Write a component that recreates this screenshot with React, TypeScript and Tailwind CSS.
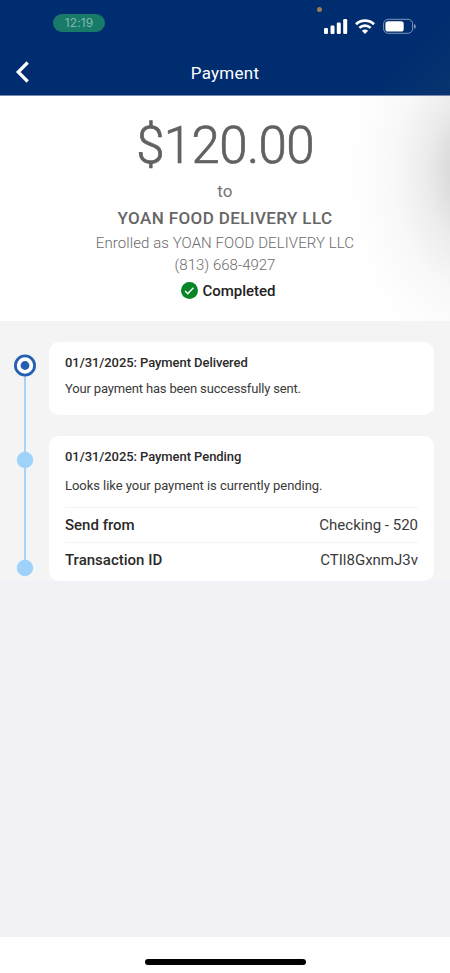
import type { ReactNode } from "react";

function StatusBar() {
  return (
    <div className="relative h-[50px]">
      <div className="absolute left-[53px] top-[14px] flex h-[18px] w-[52px] items-center justify-center rounded-full bg-[#187a68] font-['Inter',sans-serif] text-[12px] tracking-[0.1px] text-[#7fb9ae]">
        12:19
      </div>
      <span className="absolute left-[317px] top-[7px] h-[5px] w-[5px] rounded-full bg-[#9a7a58]" />
      <div className="absolute left-[324px] top-[18px] flex items-start">
        <svg width="24" height="17" viewBox="0 0 24 17" fill="#fff">
          <rect x="0" y="10" width="4" height="6" rx="1.2" />
          <rect x="6.5" y="7.5" width="4" height="8.5" rx="1.2" />
          <rect x="12.8" y="4.5" width="4" height="11.5" rx="1.2" />
          <rect x="19.2" y="1" width="4" height="15" rx="1.2" />
        </svg>
        <svg className="ml-[7px]" width="20" height="17" viewBox="0 0 20 17">
          <g fill="none" stroke="#fff" strokeWidth="2.7">
            <path d="M1 6.3a12.8 12.8 0 0 1 18 0" />
            <path d="M4.4 9.9a8 8 0 0 1 11.2 0" />
          </g>
          <path d="M10 15.9l-3.1-3.2a4.4 4.4 0 0 1 6.2 0z" fill="#fff" />
        </svg>
        <svg className="ml-[8px]" width="33" height="17" viewBox="0 0 33 17">
          <rect x="0.6" y="1.3" width="29" height="14" rx="4.5" fill="none" stroke="#7f95bb" />
          <rect x="2.4" y="3.2" width="18.3" height="10.3" rx="2.6" fill="#fff" />
          <path d="M31 6v5a2.6 2.6 0 0 0 0-5z" fill="#7f95bb" />
        </svg>
      </div>
    </div>
  );
}

function Header() {
  return (
    <header className="h-[96px] border-b border-[#7688ac] bg-[linear-gradient(135deg,#002d6f_85%,#08346f_100%)]">
      <StatusBar />
      <div className="grid h-[45px] grid-cols-[60px_1fr_60px] items-center text-white">
        <button type="button" aria-label="Back" className="-mt-px pl-[15px]">
          <svg width="15" height="22" viewBox="0 0 15 22" fill="none" stroke="#fff" strokeWidth="3.2">
            <path d="M12.7 1.5L3.2 11l9.5 9.5" />
          </svg>
        </button>
        <h1 className="pt-[2px] text-center text-[17px] tracking-[0.25px]">Payment</h1>
      </div>
    </header>
  );
}

function Summary() {
  return (
    <section className="relative h-[225px] overflow-hidden bg-white text-center">
      <div className="absolute inset-0 bg-[radial-gradient(ellipse_130px_200px_at_475px_75px,#cccccc_0%,#dadada_18%,#ececec_38%,#f8f8f8_62%,#fcfcfc_80%,#ffffff_100%)]" />
      <div className="relative flex flex-col items-center whitespace-nowrap">
        <p className="mt-[22px] h-[56px] text-[51px] font-light leading-[56px] tracking-[-0.6px] text-[#616161] [-webkit-text-stroke:0.7px_#616161]">
          $120.00
        </p>
        <p className="mt-[6px] text-[17px] leading-[22px] tracking-[0.2px] text-[#757575]">to</p>
        <p className="mt-[5px] text-[17px] font-medium leading-[22px] tracking-[0.38px] text-[#666]">
          YOAN FOOD DELIVERY LLC
        </p>
        <p className="mt-[3px] text-[15px] font-light leading-[22px] tracking-[0.08px] text-[#6b6b6b]">
          Enrolled as YOAN FOOD DELIVERY LLC
        </p>
        <p className="text-[15px] font-light leading-[22px] text-[#6b6b6b]">(813) 668-4927</p>
        <div className="mt-[4px] flex h-[22px] items-center gap-[4px] pl-[6px] text-[15px] font-medium text-[#222]">
          <svg width="18" height="18" viewBox="0 0 18 18">
            <circle cx="9.5" cy="8.5" r="8.5" fill="#078425" />
            <path d="M5.1 9l2.7 2.7 5.6-5.9" fill="none" stroke="#fff" strokeWidth="1.5" />
          </svg>
          <span>Completed</span>
        </div>
      </div>
    </section>
  );
}

function Track() {
  return (
    <svg width="24" height="226" viewBox="0 0 24 226" fill="#9fd2fb">
      <rect x="11" y="12" width="2" height="202" fill="#a8d3f5" />
      <circle cx="12" cy="11.5" r="9.6" fill="#fff" stroke="#255fb3" strokeWidth="2.8" />
      <circle cx="12" cy="11.5" r="4.4" fill="#255fb3" />
      <circle cx="12" cy="106" r="8.2" />
      <circle cx="12" cy="214" r="8.2" />
    </svg>
  );
}

function EventCard({
  title,
  message,
  className,
  children,
}: {
  title: string;
  message: string;
  className: string;
  children?: ReactNode;
}) {
  return (
    <article className={`rounded-[10px] bg-white px-4 text-[#3a3a3a] ${className}`}>
      <h2 className="pt-[11px] text-[13px] font-medium leading-[20px] tracking-[-0.07px] text-[#2a2a2a]">
        {title}
      </h2>
      {children ? (
        <p className="mt-[9px] h-[30px] text-[13px] leading-[20px] tracking-[-0.04px]">{message}</p>
      ) : (
        <p className="mt-[6px] text-[13px] leading-[20px] tracking-[-0.16px]">{message}</p>
      )}
      {children}
    </article>
  );
}

function DetailRow({ label, value }: { label: string; value: string }) {
  return (
    <div className="flex h-[35px] items-center justify-between border-t border-[#f4f4f4] text-[15px]">
      <dt className="font-medium text-[#2a2a2a]">{label}</dt>
      <dd>{value}</dd>
    </div>
  );
}

export default function App() {
  return (
    <main className="flex h-[973px] w-[450px] flex-col overflow-hidden bg-[#f2f1f6] font-['Roboto','Liberation_Sans',sans-serif]">
      <Header />
      <Summary />
      <section className="flex h-[260px] bg-[#f4f4f4]">
        <div className="w-[49px] pl-[13px] pt-[33px]">
          <Track />
        </div>
        <div className="flex w-[385px] flex-col gap-[21px] pt-[21px]">
          <EventCard
            className="h-[73px]"
            title="01/31/2025: Payment Delivered"
            message="Your payment has been successfully sent."
          />
          <EventCard
            className="h-[145px]"
            title="01/31/2025: Payment Pending"
            message="Looks like your payment is currently pending."
          >
            <dl className="pt-px">
              <DetailRow label="Send from" value="Checking - 520" />
              <DetailRow label="Transaction ID" value="CTIl8GxnmJ3v" />
            </dl>
          </EventCard>
        </div>
      </section>
      <footer className="mt-auto flex h-[36px] justify-center bg-white pt-[22px]">
        <div className="h-[6px] w-[161px] rounded-full bg-black" />
      </footer>
    </main>
  );
}
